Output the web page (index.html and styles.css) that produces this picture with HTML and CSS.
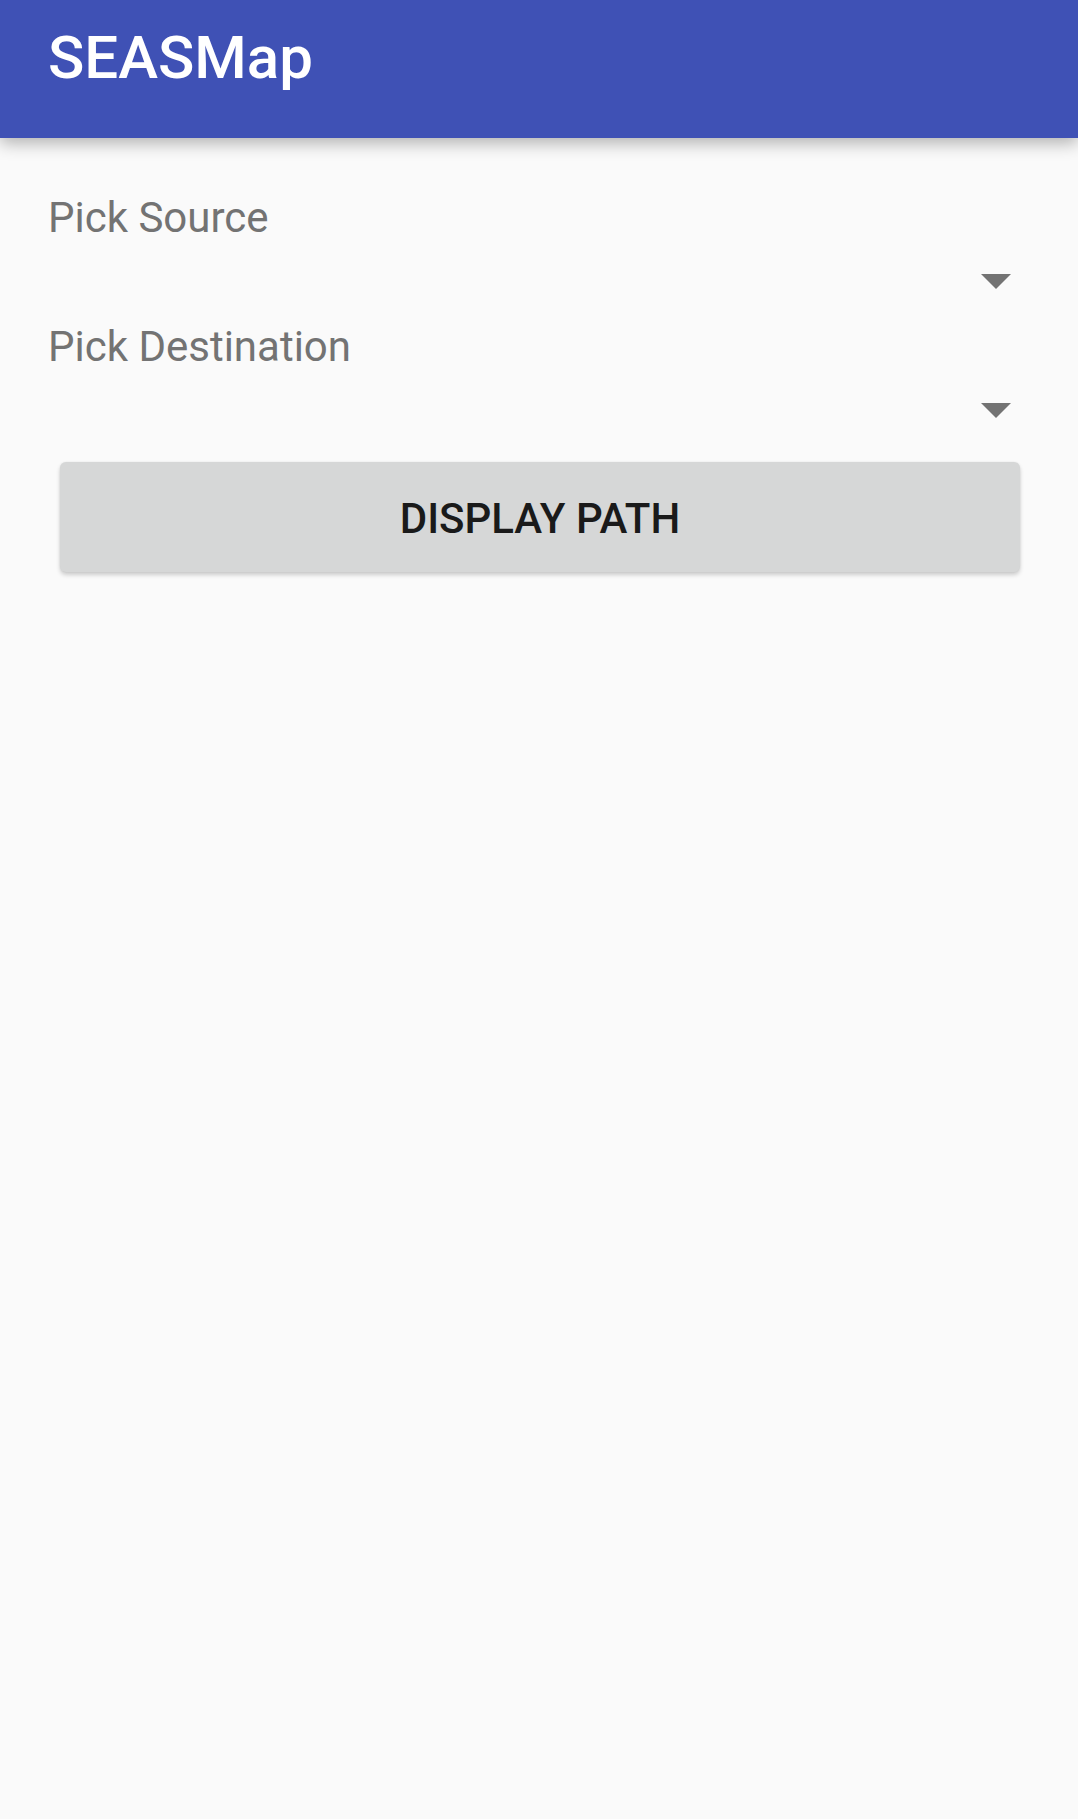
FILE: index.html
```html
<!DOCTYPE html>
<html>
<head>
<meta charset="utf-8">
<link rel="stylesheet" href="styles.css">
</head>
<body>
<header class="appbar"><h1 class="title">SEASMap</h1></header>
<main class="content">
  <section class="field">
    <div class="label">Pick Source</div>
    <div class="spinner"><span class="arrow"></span></div>
  </section>
  <section class="field">
    <div class="label">Pick Destination</div>
    <div class="spinner"><span class="arrow"></span></div>
  </section>
  <button class="btn">DISPLAY PATH</button>
</main>
</body>
</html>
```
FILE: styles.css
```css
html, body { margin: 0; padding: 0; }
body {
  width: 1078px;
  height: 1819px;
  background: #fafafa;
  font-family: Roboto, "Noto Sans", sans-serif;
  overflow: hidden;
}
.appbar {
  position: relative;
  z-index: 2;
  height: 138px;
  background: #3f51b5;
  box-shadow: 0 5px 16px rgba(0,0,0,0.3);
  padding: 28px 0 0 48px;
  box-sizing: border-box;
}
.title {
  margin: 0;
  color: #fff;
  font-size: 60px;
  line-height: 60px;
  font-weight: 500;
}
.content {
  display: flex;
  flex-direction: column;
  padding-top: 59px;
}
.field { display: flex; flex-direction: column; }
.label {
  padding-left: 48px;
  font-size: 42px;
  line-height: 42px;
  color: #737373;
}
.spinner {
  height: 88px;
  box-sizing: border-box;
  padding: 35px 67px 0 0;
  display: flex;
  justify-content: flex-end;
  align-items: flex-start;
}
.field + .field .label { margin-top: -1px; }
.arrow {
  width: 0; height: 0;
  border-left: 15px solid transparent;
  border-right: 15px solid transparent;
  border-top: 15px solid #737373;
}
.btn {
  margin: 6px 58px 0 60px;
  height: 110px;
  border: none;
  border-radius: 6px;
  background: #d6d7d7;
  box-shadow: 0 3px 4px rgba(0,0,0,0.18), 0 0 2px rgba(0,0,0,0.08);
  font-family: Roboto, "Noto Sans", sans-serif;
  font-size: 42px;
  font-weight: 500;
  color: #1a1a1a;
  padding: 4px 0 0 0;
  line-height: 44px;
}
```
